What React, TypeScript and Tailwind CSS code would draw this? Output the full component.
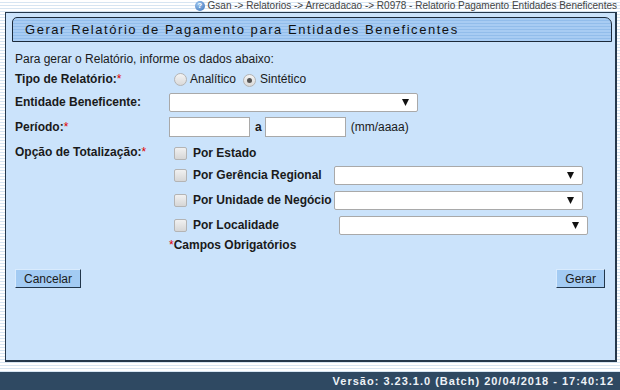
import React from 'react';

// caixa de seleção fake (sem o chevron nativo do chromium)
function SelectBox({ className = '' }: { className?: string }) {
  return (
    <div
      className={`flex h-[19px] w-[249px] items-center justify-end rounded-[2px] border border-[#a9a9a9] bg-white pr-[8px] ${className}`}
    >
      <svg width="7" height="7" viewBox="0 0 7 7">
        <path d="M0 0 L7 0 L3.5 7 Z" fill="#111" />
      </svg>
    </div>
  );
}

function Radio({ checked = false }: { checked?: boolean }) {
  return (
    <span className="relative inline-flex h-[13px] w-[13px] items-center justify-center rounded-full border border-[#b4b4b4] bg-[linear-gradient(to_bottom,#f4f4f4,#d9d9d9)]">
      {checked && <span className="h-[5px] w-[5px] rounded-full bg-[#555]" />}
    </span>
  );
}

function Check() {
  return (
    <span className="inline-block h-[13px] w-[13px] rounded-[2px] border border-[#b4b4b4] bg-[linear-gradient(to_bottom,#f1f1f1,#d6d6d6)]" />
  );
}

function Btn({ children }: { children: React.ReactNode }) {
  return (
    <button
      type="button"
      className="h-[19px] border border-t-[#d9ebfd] border-l-[#d9ebfd] border-r-[#22364a] border-b-[#22364a] bg-[#a3cbf3] px-[8px] text-[12px] leading-none text-[#1a1a1a]"
    >
      {children}
    </button>
  );
}

export default function App() {
  return (
    <div className="flex h-[390px] w-[620px] flex-col overflow-hidden bg-[repeating-linear-gradient(to_bottom,#ffffff_0px,#ffffff_2px,#d7e5f2_2px,#d7e5f2_3px)] font-['Liberation_Sans',Arial,sans-serif] text-[#1a1a1a]">
      {/* breadcrumb */}
      <div className="flex h-[12px] items-center justify-end gap-[3px] pr-[3px] text-[10px] leading-none text-[#444]">
        <span className="flex h-[10px] w-[10px] items-center justify-center rounded-full bg-[radial-gradient(circle_at_35%_30%,#9cc4ee,#3b72b8)] text-[8px] font-bold text-white">
          ?
        </span>
        <span>Gsan -&gt; Relatorios -&gt; Arrecadacao -&gt; R0978 - Relatorio Pagamento Entidades Beneficentes</span>
      </div>

      {/* painel */}
      <div className="ml-[5px] h-[350px] w-[612px] border border-r-2 border-b-2 border-[#25384c] bg-[#cbe3fb]">
        <div className="ml-[6px] mr-[3px] mt-[4px] flex h-[25px] items-center rounded-tl-[5px] rounded-tr-[7px] border border-[#1c2a3a] bg-[repeating-linear-gradient(to_bottom,#a8ccf3_0px,#a8ccf3_2px,#92bdeb_2px,#92bdeb_3px)] pl-[12px] text-[13px] tracking-[1.55px] text-[#111]">
          Gerar Relatório de Pagamento para Entidades Beneficentes
        </div>

        <div className="pl-[9px] text-[12px]">
          <div className="mt-[9px] flex h-[16px] items-center">Para gerar o Relatório, informe os dados abaixo:</div>

          <div className="flex h-[24px] items-center">
            <div className="w-[154px] font-bold">
              Tipo de Relatório:<span className="font-normal text-[#e00000]">*</span>
            </div>
            <div className="flex items-center pl-[5px]">
              <Radio />
              <span className="ml-[3px]">Analítico</span>
              <span className="ml-[7px]">
                <Radio checked />
              </span>
              <span className="ml-[4px]">Sintético</span>
            </div>
          </div>

          <div className="flex h-[22px] items-center">
            <div className="w-[154px] font-bold">Entidade Beneficente:</div>
            <SelectBox />
          </div>

          <div className="flex h-[28px] items-center">
            <div className="w-[154px] font-bold">
              Período:<span className="font-normal text-[#e00000]">*</span>
            </div>
            <div className="h-[20px] w-[81px] border border-[#a9a9a9] bg-white" />
            <span className="ml-[5px] mr-[3px] font-bold">a</span>
            <div className="h-[20px] w-[81px] border border-[#a9a9a9] bg-white" />
            <span className="ml-[5px]">(mm/aaaa)</span>
          </div>

          <div className="flex">
            <div className="w-[154px] pt-[2px] font-bold">
              Opção de Totalização:<span className="font-normal text-[#e00000]">*</span>
            </div>
            <div className="flex flex-col font-bold">
              <div className="mt-[2px] flex h-[20px] items-center pl-[5px]">
                <Check />
                <span className="ml-[6px]">Por Estado</span>
              </div>
              <div className="mt-[2px] flex h-[20px] items-center pl-[5px]">
                <Check />
                <span className="ml-[6px] w-[141px]">Por Gerência Regional</span>
                <SelectBox />
              </div>
              <div className="mt-[5px] flex h-[20px] items-center pl-[5px]">
                <Check />
                <span className="ml-[6px] w-[141px]">Por Unidade de Negócio</span>
                <SelectBox />
              </div>
              <div className="mt-[5px] flex h-[20px] items-center pl-[5px]">
                <Check />
                <span className="ml-[6px] w-[146px]">Por Localidade</span>
                <SelectBox className="w-[248px]" />
              </div>
              <div className="mt-[2px] flex h-[16px] items-center">
                <span className="font-normal text-[#e00000]">*</span>Campos Obrigatórios
              </div>
            </div>
          </div>

          <div className="mt-[16px] flex justify-between pr-[10px]">
            <Btn>Cancelar</Btn>
            <Btn>Gerar</Btn>
          </div>
        </div>
      </div>

      {/* rodapé */}
      <div className="mt-[10px] flex h-[18px] items-center justify-end bg-[#2f4962] pr-[6px] text-[11px] font-bold tracking-[1px] text-[#eef2f7]">
        Versão: 3.23.1.0 (Batch) 20/04/2018 - 17:40:12
      </div>
    </div>
  );
}
